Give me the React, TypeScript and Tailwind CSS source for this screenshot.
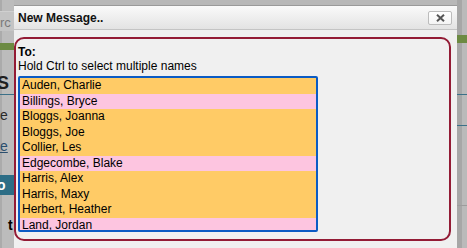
import React from "react";

const rows: { name: string; pink?: boolean }[] = [
  { name: "Auden, Charlie" },
  { name: "Billings, Bryce", pink: true },
  { name: "Bloggs, Joanna" },
  { name: "Bloggs, Joe" },
  { name: "Collier, Les" },
  { name: "Edgecombe, Blake", pink: true },
  { name: "Harris, Alex" },
  { name: "Harris, Maxy" },
  { name: "Herbert, Heather" },
  { name: "Land, Jordan", pink: true },
];

export default function App() {
  return (
    <div
      className="relative w-[467px] h-[248px] overflow-hidden bg-[#b8b8b8]"
      style={{ fontFamily: '"Liberation Sans", Arial, sans-serif' }}
    >
      {/* dimmed background page */}
      <div className="flex h-full">
        <div className="w-[14px] flex flex-col overflow-hidden bg-[linear-gradient(to_right,#ababab_2px,#bcbcbc_2px)]">
          <div className="h-[11px] shrink-0" />
          <div className="h-[20px] shrink-0 bg-[#c4c4c4] border-t border-[#d0d0d0] overflow-hidden">
            <div className="pt-[3px] text-[13px] leading-[15px] text-[#7a7a7a] whitespace-nowrap">rc</div>
          </div>
          <div className="h-[12px] shrink-0" />
          <div className="h-[7px] shrink-0 bg-[#6c8a42]" />
          <div className="h-[24px] shrink-0" />
          <div className="h-[19px] shrink-0 text-[18px] leading-[19px] font-bold text-[#1e1e1e] overflow-hidden whitespace-nowrap -ml-[3px]">
            S
          </div>
          <div className="h-[1px] shrink-0" />
          <div className="h-[1px] shrink-0 bg-[#3b7088]" />
          <div className="h-[12px] shrink-0" />
          <div className="h-[16px] shrink-0 text-[14px] leading-[16px] text-[#2a2a2a] overflow-hidden">e</div>
          <div className="h-[15px] shrink-0" />
          <div className="h-[16px] shrink-0 text-[14px] leading-[16px] text-[#2b4f6e] underline overflow-hidden">e</div>
          <div className="h-[21px] shrink-0" />
          <div className="h-[20px] shrink-0 bg-[#2c6d86] text-[14px] leading-[20px] text-white font-bold overflow-hidden -indent-[3px]">
            o
          </div>
          <div className="h-[22px] shrink-0" />
          <div className="h-[16px] shrink-0 pl-[8px] text-[14px] leading-[16px] font-bold text-black overflow-hidden">
            t
          </div>
        </div>
        <div className="flex-1" />
        <div className="w-[10px] flex flex-col bg-[linear-gradient(to_right,#a7a7a7_5px,#bababa_5px)]">
          <div className="h-[35px] shrink-0" />
          <div className="h-[8px] shrink-0 bg-[#6c8a42]" />
          <div className="h-[51px] shrink-0" />
          <div className="h-[1px] shrink-0 bg-[#3b7088]" />
          <div className="h-[30px] shrink-0" />
          <div className="h-[1px] shrink-0 bg-[#3b7088]" />
          <div className="h-[79px] shrink-0" />
          <div className="h-[1px] shrink-0 bg-[#9c9c9c]" />
        </div>
      </div>

      {/* dialog */}
      <div className="absolute left-[14px] top-[5px] w-[443px] h-[260px] bg-[#f0f0f0] flex flex-col">
        <div className="h-[25px] shrink-0 border-t border-b border-t-[#9a9a9a] border-b-[#c4c4c4] bg-[linear-gradient(to_bottom,#fafafa,#e3e3e3)] flex items-center justify-between pl-[4px] pr-[5px]">
          <span className="text-[12px] leading-[14px] font-bold text-[#111]">New Message..</span>
          <button className="w-[24px] h-[14px] border border-[#bcbcbc] rounded-[2px] bg-[linear-gradient(to_bottom,#ffffff,#f4f4f4)] flex items-center justify-center">
            <svg width="9" height="8" viewBox="0 0 9 8">
              <path d="M1 0.8 L8 7.2 M8 0.8 L1 7.2" stroke="#555" strokeWidth="2" fill="none" />
            </svg>
          </button>
        </div>
        <div className="pt-[7px]">
          <div className="w-[437px] h-[204px] border-2 border-[#931b35] rounded-[10px] pl-[2px] pt-[6px] text-[12px] leading-[14px] text-black">
            <div className="font-bold">To:</div>
            <div>Hold Ctrl to select multiple names</div>
            <div className="mt-[3px] w-[300px] h-[156px] border-2 border-[#0b5bc4] rounded-[2px] overflow-hidden bg-[#ffcb66]">
              {rows.map((r) => (
                <div
                  key={r.name}
                  className={`h-[15.5px] leading-[15.5px] pl-[2px] whitespace-nowrap ${r.pink ? "bg-[#fdc5e0]" : "bg-[#ffcb66]"}`}
                >
                  {r.name}
                </div>
              ))}
            </div>
          </div>
        </div>
      </div>
    </div>
  );
}
